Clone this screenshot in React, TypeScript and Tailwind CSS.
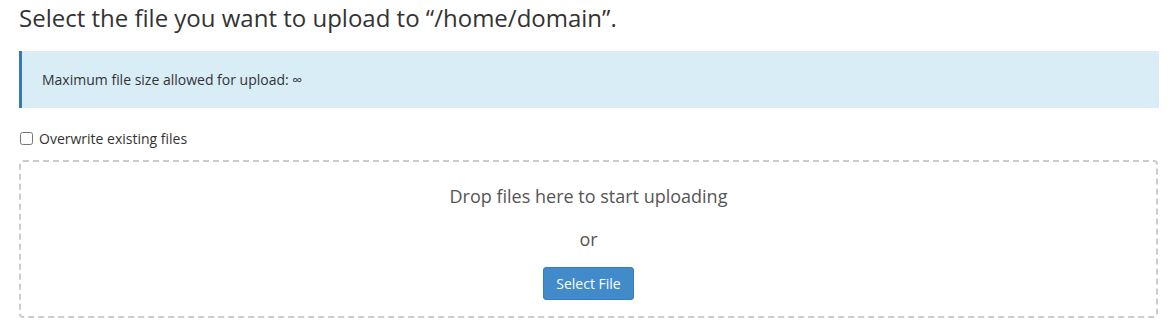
export default function App() {
  return (
    <div className="w-[1174px] h-[333px] bg-white px-[19px] pt-[3px] text-[#333]" style={{ fontFamily: '"Open Sans", sans-serif' }}>
      <h1 className="text-[24px] leading-[30px] text-[#333] font-normal">Select the file you want to upload to “/home/domain”.</h1>
      <div className="mt-[18px] h-[57px] bg-[#d9edf7] border-l-[3px] border-[#337ab7] pl-[20px] flex items-center w-[1140px]">
        <span className="text-[14px] text-[#333]">Maximum file size allowed for upload: ∞</span>
      </div>
      <label className="mt-[21px] flex items-center gap-[6px] h-[18px]">
        <input type="checkbox" className="w-[13px] h-[13px] m-0 ml-[1px]" />
        <span className="text-[14px] text-[#333]">Overwrite existing files</span>
      </label>
      <div className="mt-[13px] h-[158px] w-[1139px] border-2 border-dashed border-[#ccc] rounded-[4px] flex flex-col items-center">
        <div className="mt-[22px] text-[18px] leading-[24px] text-[#555]">Drop files here to start uploading</div>
        <div className="mt-[19px] text-[18px] leading-[24px] text-[#555]">or</div>
        <button className="mt-[16px] w-[91px] h-[33px] bg-[#428bca] border border-[#357ebd] rounded-[3px] text-white text-[14px]">Select File</button>
      </div>
    </div>
  );
}
